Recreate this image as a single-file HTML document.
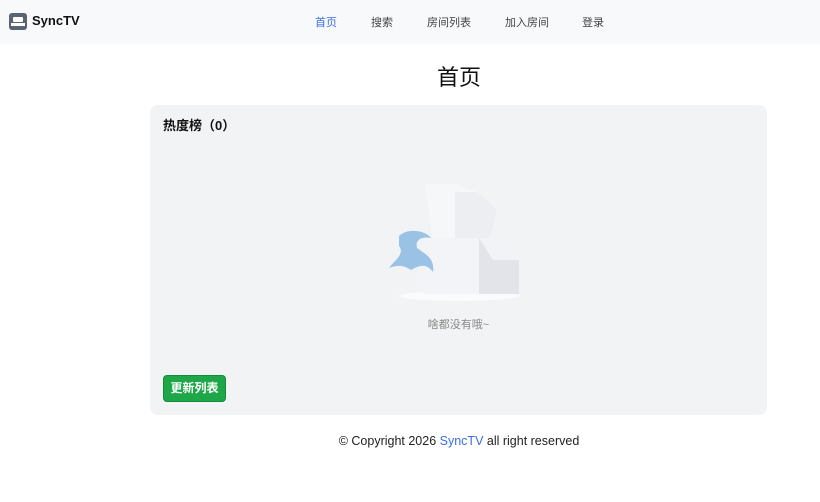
<!DOCTYPE html>
<html><head><meta charset="utf-8"><style>
*{margin:0;padding:0;box-sizing:border-box}
body{width:820px;height:502px;background:#fff;font-family:"Liberation Sans","Noto Sans CJK SC",sans-serif;position:relative;overflow:hidden}
.nav{position:absolute;left:0;top:0;width:820px;height:44px;background:#f8f9fb}
.logo{position:absolute;left:9px;top:13px;width:18px;height:17px;background:#5a6472;border-radius:3px}
.brand{position:absolute;left:32px;top:13px;font-size:13px;font-weight:bold;color:#111}
.nl{position:absolute;top:14px;font-size:11px;color:#444}
h1{position:absolute;left:0;width:918px;text-align:center;top:60px;font-size:22px;font-weight:normal;color:#111}
.card{position:absolute;left:150px;top:105px;width:617px;height:310px;background:#f2f3f5;border-radius:8px}
.t{position:absolute;left:13px;top:10px;font-size:13px;font-weight:bold;color:#111}
.btn{position:absolute;left:13px;top:270px;width:63px;height:27px;background:#1ea748;border-radius:4px;color:#fff;font-size:12px;font-weight:bold;text-align:center;line-height:25px;border:1px solid #158a3a}
.empty{position:absolute;left:0;width:617px;text-align:center;top:211px;font-size:11px;color:#888}
.foot{position:absolute;left:0;width:918px;text-align:center;top:434px;font-size:12.5px;color:#222}
</style></head><body>
<div class="nav">
<div class="logo"><div style="position:absolute;left:4px;top:4px;width:10px;height:5px;background:#fff;border-radius:1px"></div><div style="position:absolute;left:2px;top:10px;width:14px;height:3px;background:#fff"></div></div>
<div class="brand">SyncTV</div>
<span class="nl" style="left:315px;color:#3b6fe0">首页</span>
<span class="nl" style="left:371px">搜索</span>
<span class="nl" style="left:427px">房间列表</span>
<span class="nl" style="left:505px">加入房间</span>
<span class="nl" style="left:582px">登录</span>
</div>
<h1>首页</h1>
<div class="card">
<div class="t">热度榜（0）</div>
<svg style="position:absolute;left:235px;top:75px" width="140" height="125" viewBox="0 0 140 125">
<ellipse cx="74" cy="116" rx="60" ry="5" fill="#fafbfc"/>
<path d="M40 4 L70 4 L92 12 L112 30 L104 62 L48 62 Z" fill="#f6f7f9"/>
<path d="M70 12 L92 12 L112 30 L104 62 L70 60 Z" fill="#eceef1"/>
<rect x="38" y="58" width="56" height="56" fill="#f3f4f7"/>
<path d="M94 58 L120 58 L134 80 L134 114 L94 114 Z" fill="#e2e4ea"/>
<path d="M94 58 L120 58 L134 80 L108 80 Z" fill="#f2f3f6"/>
<path d="M14 56 C22 48 40 50 46 58 C36 56 30 60 32 68 C40 74 50 78 48 92 C42 84 36 84 26 90 C20 86 14 84 4 88 C10 80 20 74 14 66 Z" fill="#8fbde3" opacity=".9"/>
</svg>
<div class="empty">啥都没有哦~</div>
<div class="btn">更新列表</div>
</div>
<div class="foot">© Copyright 2026 <span style="color:#3b6fe0">SyncTV</span> all right reserved</div>
</body></html>
